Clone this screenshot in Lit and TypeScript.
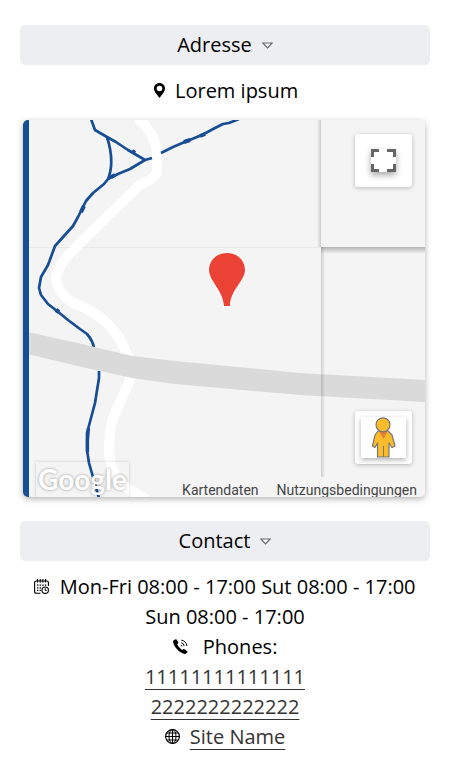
import { LitElement, html, css, svg } from "lit";
import { customElement, property, state } from "lit/decorators.js";

const calendarIcon = svg`<svg class="icon" viewBox="0 0 15 15" aria-hidden="true" fill="none" stroke="#000">
  <path d="M6.5 14.3H2.3Q.6 14.3.6 12.6V3.6Q.6 2 2.3 2H12.7Q14.4 2 14.4 3.6V7" stroke-width="1.1"/>
  <path d="M3.5 0V3.4M6.2 0V3.4M8.9 0V3.4M11.6 0V3.4" stroke-width="1.1"/>
  <path d="M3 6.2H12.4M3 8.8H8M3 11.4H7" stroke-width="1.3" stroke-dasharray="1.4 1.2"/>
  <circle cx="11.2" cy="11.2" r="3.2" stroke-width="1.1"/>
  <path d="M11.2 9.2V11.4H12.8" stroke-width="1"/>
</svg>`;

const phoneIcon = svg`<svg class="icon" viewBox="0 0 15 15" aria-hidden="true">
  <path d="M1 1.1L2.7.2Q3.4 0 3.8.7L5.3 3.4Q5.6 4 5 4.5L4.1 5.3Q5.7 8.9 9 11L10.3 10.2Q10.9 9.9 11.5 10.3L14.2 12.2Q14.8 12.7 14.3 13.4L13.2 14.5Q12.4 15.2 10.8 14.8C5.8 13.3 1.3 8.4.2 3.6Q-.2 1.9 1 1.1Z"/>
  <path d="M8.3 3.7Q10.8 4.3 11.2 7M8.4 1.2Q13.1 2 13.9 7" fill="none" stroke="#000" stroke-width="1"/>
  <path d="M7.8 6Q9.1 6.3 9.2 7.6" fill="none" stroke="#000" stroke-width=".8"/>
</svg>`;

const globeIcon = svg`<svg class="icon" viewBox="0 0 15 15" aria-hidden="true" fill="none" stroke="#000">
  <circle cx="7.5" cy="7.5" r="6.9" stroke-width="1.2"/>
  <ellipse cx="7.5" cy="7.5" rx="3.5" ry="6.9"/>
  <path d="M7.5.5V14.5M.5 7.5H14.5M1.6 4H13.4M1.6 11H13.4"/>
</svg>`;

const placeIcon = svg`<svg class="icon" viewBox="0 0 15 15" aria-hidden="true">
  <path fill-rule="evenodd" d="M7.5 0C4.4 0 2 2.4 2 5.4C2 8.3 4.2 10.4 7.5 15C10.8 10.4 13 8.3 13 5.4C13 2.4 10.6 0 7.5 0ZM7.5 2.7A2.8 2.8 0 1 1 7.5 8.3A2.8 2.8 0 1 1 7.5 2.7Z"/>
</svg>`;

@customElement("info-section")
class InfoSection extends LitElement {
  @property() heading = "";
  @state() private open = true;

  static styles = css`
    :host { display: block; }
    .heading { margin: 0; font: inherit; }
    .toggle {
      display: flex;
      align-items: center;
      justify-content: center;
      gap: 10px;
      width: 100%;
      padding: 5px;
      border: 0;
      border-radius: 5px;
      background: #edeef2;
      color: #000;
      font: inherit;
      cursor: pointer;
    }
    .arrow { width: 11px; height: 7px; }
    .body { padding-top: 11px; text-align: center; }
  `;

  render() {
    return html`
      <h2 class="heading">
        <button class="toggle" type="button" aria-expanded=${this.open ? "true" : "false"}
          @click=${() => (this.open = !this.open)}>
          ${this.heading}
          <svg class="arrow" viewBox="0 0 11 7" aria-hidden="true">
            <path d="M.8 1H10.2L5.5 5.9Z" fill="#f8f8fa" stroke="#666" stroke-width="1.2"/>
          </svg>
        </button>
      </h2>
      <div class="body" ?hidden=${!this.open}><slot></slot></div>
    `;
  }
}

@customElement("location-map")
class LocationMap extends LitElement {
  static styles = css`
    :host {
      display: block;
      position: relative;
      overflow: hidden;
      border-radius: 5px;
      background: #f4f4f4;
      box-shadow: 0 2px 6px rgba(0, 0, 0, 0.3);
    }
    .tiles { display: block; width: 100%; height: auto; }
    .brand {
      position: absolute;
      left: 13px;
      bottom: 0;
      padding: 0 2px;
      color: #fff;
      font: 700 28px/35px Lato, sans-serif;
      text-shadow: 0 0 3px rgba(0, 0, 0, 0.4);
      text-decoration: none;
      box-shadow: 0 0 3px rgba(0, 0, 0, 0.18);
    }
    .control {
      position: absolute;
      right: 13px;
      display: grid;
      place-items: center;
      width: 57px;
      height: 53px;
      padding: 0;
      border: 0;
      border-radius: 3px;
      background: #fff;
      box-shadow: 0 1px 4px rgba(0, 0, 0, 0.25);
      cursor: pointer;
    }
    .full { top: 14px; }
    .street { bottom: 33px; }
    .corners { width: 25px; height: 23px; filter: drop-shadow(0 3px 3px rgba(0, 0, 0, 0.35)); }
    .person {
      width: 45px;
      height: 41px;
      background: #fff;
      box-shadow: 0 2px 5px rgba(0, 0, 0, 0.3);
    }
    .terms {
      position: absolute;
      right: 8px;
      bottom: 0;
      display: flex;
      gap: 18px;
      font: 14px/14px Roboto, sans-serif;
    }
    .term { color: #444; text-decoration: none; }
  `;

  render() {
    return html`
      <svg class="tiles" viewBox="0 0 402 377" role="img" aria-label="Map">
        <defs>
          <linearGradient id="left"><stop offset="0" stop-opacity="0"/><stop offset="1" stop-opacity=".16"/></linearGradient>
          <linearGradient id="right"><stop offset="0" stop-opacity=".16"/><stop offset="1" stop-opacity="0"/></linearGradient>
          <linearGradient id="down" x2="0" y2="1"><stop offset="0" stop-opacity=".26"/><stop offset="1" stop-opacity="0"/></linearGradient>
        </defs>
        <rect width="402" height="377" fill="#f4f4f4"/>
        <path d="M6 127.5H298" stroke="#e9e9e9"/>
        <path d="M115-2Q134 16 134 35V52Q132 58 117 65L92 89L55 125Q33 147 33 158Q34 173 52 184L60 187Q92 203 102 230L109 247L107 260L92 293Q87 303 86 326Q86 350 98 363Q106 371 124 379" fill="none" stroke="#fff" stroke-width="10"/>
        <g fill="none" stroke="#174d93" stroke-width="2.7" stroke-linejoin="round">
          <path d="M68-1L72 10L84 17L93 22L105 30L122 40L129 38M138 33L150 27L164 21L179 15L192 8L200 4L206 3L216-1"/>
          <path d="M84 17Q92 42 85 59L95 54L107 49L122 40M85 59L81 64L70 73L63 81L59 89L55 97L50 106L41 116L32 126L25 145L18 157L16 168L18 175L25 184L34 191L45 200L57 209L64 214Q70 221 71 228"/>
          <path d="M76 251V258L72 283L64 313V330L66 343L70 357L76 378"/>
        </g>
        <path d="M161 22L167 20M177 16L182 14M61 86L58 92M33 190L36 192M88 57L92 55M109 31L112 33" fill="none" stroke="#174d93" stroke-width="4"/>
        <path d="M65.5 308L64.5 320V332" fill="none" stroke="#174d93" stroke-width="3.2"/>
        <path d="M0 211L59 224L109 236L152 241L277 253L402 260V282L277 275L152 264L109 258L59 247L0 233Z" fill="#dadada"/>
        <rect x="294" width="4" height="127" fill="url(#left)"/>
        <rect x="298" y="127" width="104" height="7" fill="url(#down)"/>
        <rect x="298" y="127" width="4" height="230" fill="url(#right)"/>
        <path d="M204 133C193 133 186 141 186 150C186 161 200 170 201 186H207C207 170 222 161 222 150C222 141 215 133 204 133Z" fill="#ea4335" stroke="#fff" stroke-width="2" paint-order="stroke"/>
        <rect width="6" height="377" fill="#174d93"/>
      </svg>
      <a class="brand" href="#">Google</a>
      <button class="control full" type="button" aria-label="Fullscreen">
        <svg class="corners" viewBox="0 0 25 23" aria-hidden="true">
          <rect width="25" height="23" fill="#fff"/>
          <path d="M1.5 8V1.5H8M16 1.5H23.5V8M23.5 15V21.5H16M8 21.5H1.5V15" fill="none" stroke="#666" stroke-width="3"/>
        </svg>
      </button>
      <button class="control street" type="button" aria-label="Street View">
        <svg class="person" viewBox="0 0 45 41" aria-hidden="true">
          <path d="M17 14H27L31 18L34 29L31 30.5L28 26V40H16.5V26L14 30.5L11.5 29L14 18Z" fill="#fbbc2c" stroke="#777" stroke-width="1.2" stroke-linejoin="round"/>
          <path d="M18 14H27L22.5 22Z" fill="#e58033"/>
          <path d="M22.5 29V40" stroke="#777"/>
          <circle cx="22" cy="7.8" r="7" fill="#fbbc2c" stroke="#777" stroke-width="1.2"/>
        </svg>
      </button>
      <div class="terms">
        <a class="term" href="#">Kartendaten</a>
        <a class="term" href="#">Nutzungsbedingungen</a>
      </div>
    `;
  }
}

@customElement("app-root")
class AppRoot extends LitElement {
  static styles = css`
    :host {
      display: block;
      padding: 25px 20px;
      background: #fff;
      color: #000;
      font: 20px/30px "Open Sans", sans-serif;
    }
    .address { margin-bottom: 24px; }
    .line { margin: 0; }
    .map { margin: 14px 5px 0 3px; }
    .icon { width: 15px; height: 15px; margin-right: 5px; }
    .place .icon { margin-right: 3px; }
    .phones .icon { margin-right: 10px; }
    .link {
      color: #333;
      text-decoration: underline 1px;
      text-underline-offset: 5px;
      text-decoration-skip-ink: none;
    }
  `;

  render() {
    return html`
      <info-section class="address" heading="Adresse">
        <p class="line place">${placeIcon} Lorem ipsum</p>
        <location-map class="map"></location-map>
      </info-section>
      <info-section heading="Contact">
        <p class="line">${calendarIcon} Mon-Fri 08:00 - 17:00 Sut 08:00 - 17:00 Sun 08:00 - 17:00</p>
        <p class="line phones">${phoneIcon} Phones:</p>
        <p class="line"><a class="link" href="tel:11111111111111">11111111111111</a></p>
        <p class="line"><a class="link" href="tel:2222222222222">2222222222222</a></p>
        <p class="line">${globeIcon} <a class="link" href="#">Site Name</a></p>
      </info-section>
    `;
  }
}
